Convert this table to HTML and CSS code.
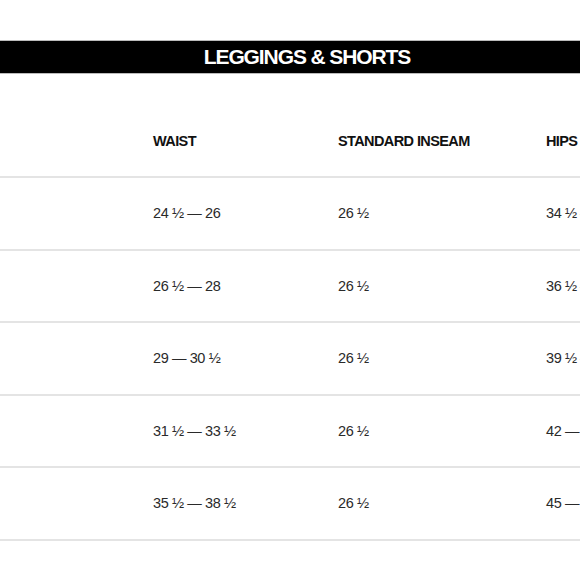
FILE: index.html
```html
<!DOCTYPE html>
<html>
<head>
<meta charset="utf-8">
<link rel="stylesheet" href="styles.css">
</head>
<body>
<div class="page">
  <div class="title-bar"><h1 class="title">LEGGINGS &amp; SHORTS</h1></div>
  <div class="table">
    <div class="row head">
      <div class="cell"></div>
      <div class="cell">WAIST</div>
      <div class="cell">STANDARD INSEAM</div>
      <div class="cell">HIPS</div>
    </div>
    <div class="row">
      <div class="cell"></div>
      <div class="cell">24 ½ — 26</div>
      <div class="cell">26 ½</div>
      <div class="cell">34 ½ — 36</div>
    </div>
    <div class="row">
      <div class="cell"></div>
      <div class="cell">26 ½ — 28</div>
      <div class="cell">26 ½</div>
      <div class="cell">36 ½ — 39</div>
    </div>
    <div class="row">
      <div class="cell"></div>
      <div class="cell">29 — 30 ½</div>
      <div class="cell">26 ½</div>
      <div class="cell">39 ½ — 42</div>
    </div>
    <div class="row">
      <div class="cell"></div>
      <div class="cell">31 ½ — 33 ½</div>
      <div class="cell">26 ½</div>
      <div class="cell">42 — 45</div>
    </div>
    <div class="row">
      <div class="cell"></div>
      <div class="cell">35 ½ — 38 ½</div>
      <div class="cell">26 ½</div>
      <div class="cell">45 — 48</div>
    </div>
  </div>
</div>
</body>
</html>
```
FILE: styles.css
```css
html, body {
  margin: 0;
  padding: 0;
  background: #fff;
  overflow: hidden;
}
.page {
  width: 580px;
  height: 580px;
  padding-top: 40px;
  box-sizing: border-box;
  font-family: "Liberation Sans", Arial, sans-serif;
}
.title-bar {
  background: #000;
  height: 32px;
  border-top: 1px solid #bbb;
  border-bottom: 1px solid #bbb;
  display: flex;
  align-items: center;
  justify-content: center;
}
.title {
  margin: 0 0 0 34px;
  color: #fff;
  font-size: 21px;
  font-weight: bold;
  letter-spacing: -1.1px;
  line-height: 32px;
}
.table {
  display: flex;
  flex-direction: column;
}
.row {
  display: grid;
  grid-template-columns: 153px 185px 208px 1fr;
  height: 70.5px;
  align-items: center;
  border-bottom: 2px solid #e4e4e4;
  font-size: 14.5px;
  color: #2a2a2a;
  letter-spacing: -0.4px;
  white-space: nowrap;
  overflow: hidden;
}
.row.head {
  height: auto;
  padding-top: 57px;
  padding-bottom: 25px;
  line-height: 20px;
  font-size: 14.5px;
  font-weight: bold;
  color: #111;
  letter-spacing: -0.6px;
}
```
